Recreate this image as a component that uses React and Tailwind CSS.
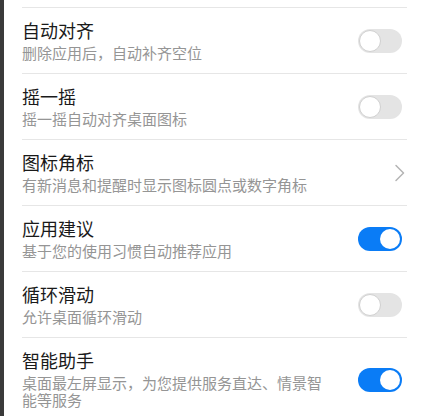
import React from "react";

const rows = [
  { title: "自动对齐", sub: "删除应用后，自动补齐空位", type: "off" },
  { title: "摇一摇", sub: "摇一摇自动对齐桌面图标", type: "off" },
  { title: "图标角标", sub: "有新消息和提醒时显示图标圆点或数字角标", type: "chevron" },
  { title: "应用建议", sub: "基于您的使用习惯自动推荐应用", type: "on" },
  { title: "循环滑动", sub: "允许桌面循环滑动", type: "off" },
  { title: "智能助手", sub: "桌面最左屏显示，为您提供服务直达、情景智能等服务", type: "on" },
];

function Toggle({ on }) {
  if (on) {
    return (
      <div className="w-[44px] h-[24px] rounded-full bg-[#0a7cf6] flex items-center justify-end pr-[2px] shrink-0">
        <div className="w-[20px] h-[20px] rounded-full bg-white" />
      </div>
    );
  }
  return (
    <div className="w-[44px] h-[24px] rounded-full bg-[#e4e4e4] flex items-center pl-[1px] shrink-0">
      <div className="w-[22px] h-[22px] rounded-full bg-white border border-[#d0d0d0]" />
    </div>
  );
}

function Chevron() {
  return (
    <div className="w-[44px] flex justify-end shrink-0">
      <svg width="12" height="18" viewBox="0 0 12 18" className="-mr-[4px]">
        <path d="M2 1.5 L9.5 9 L2 16.5" fill="none" stroke="#b4b4b4" strokeWidth="1.5" strokeLinecap="round" strokeLinejoin="round" />
      </svg>
    </div>
  );
}

export default function App() {
  return (
    <div
      className="w-[426px] h-[416px] overflow-hidden bg-white flex"
      style={{ fontFamily: '"Liberation Sans", "Noto Sans CJK SC", sans-serif' }}
    >
      <div className="w-[4px] bg-[#3a3a3a] shrink-0" />
      <div className="flex-1 pl-[18px] pr-[19px]">
        <div className="h-[7px]" />
        {rows.map((r, i) => (
          <div key={i} className="border-t border-[#e6e6e6] flex items-center pr-[5px] pt-[12px] pb-[11px]">
            <div className="flex-1 min-w-0 pr-[22px]">
              <div className="text-[18px] leading-[25px] text-[#1a1a1a]">{r.title}</div>
              <div className="text-[15px] leading-[17px] text-[#959595]">{r.sub}</div>
            </div>
            {r.type === "chevron" ? <Chevron /> : <Toggle on={r.type === "on"} />}
          </div>
        ))}
      </div>
    </div>
  );
}
